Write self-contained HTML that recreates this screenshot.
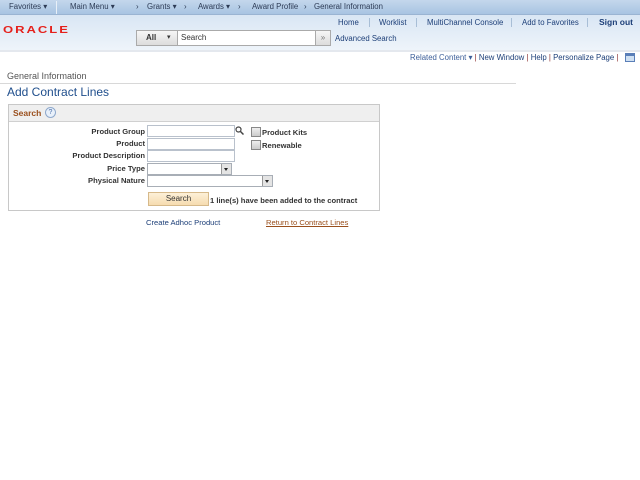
<!DOCTYPE html>
<html><head><style>
body{margin:0;width:640px;height:480px;background:#fff;font-family:"Liberation Sans",sans-serif;position:relative;overflow:hidden}
.a{position:absolute;white-space:nowrap}
.t1{font-size:7.8px;color:#2d3b55}
.lbl{font-size:7.6px;font-weight:bold;color:#333;text-align:right;width:140px;left:5px}
.inp{position:absolute;border:1px solid #b9c1cc;background:#fff;height:10px}
.sel{position:absolute;border:1px solid #a8aeb6;background:#fff;height:10px}
.sel b{position:absolute;right:0;top:0;width:9px;height:10px;background:#e4e4e4;border-left:1px solid #999}
.sel b:after{content:"";position:absolute;left:2px;top:4px;border:2.5px solid transparent;border-top:3px solid #222}
.cb{position:absolute;width:8px;height:8px;border:1px solid #888;background:linear-gradient(#eee,#ccc)}
.sep{position:absolute;width:1px;height:9px;background:#a8bed6}
</style></head><body>
<div class="a" style="left:0;top:0;width:640px;height:14px;background:linear-gradient(#c4d7ec,#a8c4e2);border-bottom:1px solid #9ab4d2"></div>
<div class="a" style="left:56px;top:1px;width:1px;height:13px;background:#e8f0f8"></div>
<div class="a t1" style="left:9px;top:2px">Favorites ▾</div>
<div class="a t1" style="left:70px;top:2px">Main Menu ▾</div>
<div class="a t1" style="left:136px;top:2px">›</div>
<div class="a t1" style="left:147px;top:2px">Grants ▾</div>
<div class="a t1" style="left:184px;top:2px">›</div>
<div class="a t1" style="left:198px;top:2px">Awards ▾</div>
<div class="a t1" style="left:238px;top:2px">›</div>
<div class="a t1" style="left:252px;top:2px">Award Profile</div>
<div class="a t1" style="left:304px;top:2px">›</div>
<div class="a t1" style="left:314px;top:2px">General Information</div>
<div class="a" style="left:0;top:15px;width:640px;height:35px;background:linear-gradient(#d9e6f4,#eef4fa)"></div>
<div class="a" style="left:0;top:50px;width:640px;height:2px;background:#e4e8ee"></div>
<div class="a t1" style="left:338px;top:18px;color:#1d3f78">Home</div>
<div class="sep" style="left:369px;top:18px"></div>
<div class="a t1" style="left:379px;top:18px;color:#1d3f78">Worklist</div>
<div class="sep" style="left:416px;top:18px"></div>
<div class="a t1" style="left:427px;top:18px;color:#1d3f78">MultiChannel Console</div>
<div class="sep" style="left:511px;top:18px"></div>
<div class="a t1" style="left:522px;top:18px;color:#1d3f78">Add to Favorites</div>
<div class="sep" style="left:587px;top:18px"></div>
<div class="a" style="left:599px;top:17px;font-size:8.5px;font-weight:bold;color:#1d3f78">Sign out</div>
<div class="a" style="left:3px;top:24px;font-size:13px;font-weight:bold;color:#e5201b;letter-spacing:2px;transform:scaleY(0.75);transform-origin:top">ORACLE</div>
<div class="a" style="left:136px;top:30px;width:40px;height:14px;background:linear-gradient(#f6f6f6,#dcdcdc);border:1px solid #aaa"></div>
<div class="a" style="left:146px;top:33px;font-size:8px;font-weight:bold;color:#333">All</div>
<div class="a" style="left:167px;top:33px;font-size:7px;color:#333">▾</div>
<div class="a" style="left:177px;top:30px;width:137px;height:14px;background:#fff;border:1px solid #aaa"></div>
<div class="a" style="left:181px;top:33px;font-size:8px;color:#333">Search</div>
<div class="a" style="left:315px;top:30px;width:14px;height:14px;background:linear-gradient(#f6f6f6,#dcdcdc);border:1px solid #aaa;font-size:8px;color:#777;text-align:center;line-height:13px">»</div>
<div class="a t1" style="left:335px;top:34px;color:#1d3f78">Advanced Search</div>
<div class="a t1" style="left:410px;top:53px;color:#3d5f99">Related Content ▾ <span style="color:#8a3030">|</span> <span style="color:#1d3f78">New Window</span> <span style="color:#8a3030">|</span> <span style="color:#1d3f78">Help</span> <span style="color:#8a3030">|</span> <span style="color:#1d3f78">Personalize Page</span> <span style="color:#8a3030">|</span></div>
<div class="a" style="left:625px;top:53px;width:8px;height:7px;border:1px solid #5a7fb8;background:linear-gradient(#5a7fb8 2px,#cfe0f2 2px)"></div>
<div class="a" style="left:7px;top:71px;font-size:9px;color:#555">General Information</div>
<div class="a" style="left:0;top:83px;width:516px;height:1px;background:#d8d8d8"></div>
<div class="a" style="left:7px;top:85px;font-size:12px;color:#1f4e8c">Add Contract Lines</div>
<div class="a" style="left:8px;top:104px;width:370px;height:105px;border:1px solid #c8c8c8"></div>
<div class="a" style="left:9px;top:105px;width:370px;height:16px;background:#efefef;border-bottom:1px solid #d0d0d0"></div>
<div class="a" style="left:13px;top:108px;font-size:8.5px;font-weight:bold;color:#9a4f1c">Search</div>
<div class="a" style="left:45px;top:107px;width:9px;height:9px;border-radius:50%;border:1px solid #8fa9cc;background:#e8f0fa;font-size:7px;color:#4a6ea8;text-align:center;line-height:9px">?</div>
<div class="a lbl" style="top:127px">Product Group</div>
<div class="a lbl" style="top:139px">Product</div>
<div class="a lbl" style="top:151px">Product Description</div>
<div class="a lbl" style="top:164px">Price Type</div>
<div class="a lbl" style="top:176px">Physical Nature</div>
<div class="inp" style="left:147px;top:125px;width:86px"></div>
<div class="inp" style="left:147px;top:138px;width:86px"></div>
<div class="inp" style="left:147px;top:150px;width:86px"></div>
<div class="sel" style="left:147px;top:163px;width:83px"><b></b></div>
<div class="sel" style="left:147px;top:175px;width:124px"><b></b></div>
<svg class="a" style="left:235px;top:126px" width="9" height="9"><circle cx="3.5" cy="3.5" r="2.5" fill="none" stroke="#444" stroke-width="1.2"/><line x1="5.5" y1="5.5" x2="8.5" y2="8.5" stroke="#444" stroke-width="1.5"/></svg>
<div class="cb" style="left:251px;top:127px"></div>
<div class="a" style="left:262px;top:128px;font-size:7.6px;font-weight:bold;color:#333">Product Kits</div>
<div class="cb" style="left:251px;top:140px"></div>
<div class="a" style="left:262px;top:141px;font-size:7.6px;font-weight:bold;color:#333">Renewable</div>
<div class="a" style="left:148px;top:192px;width:59px;height:12px;border:1px solid #d6b98a;background:linear-gradient(#fdf0d8,#f6dcb0);font-size:8px;color:#333;text-align:center;line-height:12px">Search</div>
<div class="a" style="left:210px;top:196px;font-size:7.6px;font-weight:bold;color:#333">1 line(s) have been added to the contract</div>
<div class="a" style="left:146px;top:218px;font-size:7.6px;color:#1d3f78">Create Adhoc Product</div>
<div class="a" style="left:266px;top:218px;font-size:7.6px;color:#9a4f1c;text-decoration:underline">Return to Contract Lines</div>
</body></html>
